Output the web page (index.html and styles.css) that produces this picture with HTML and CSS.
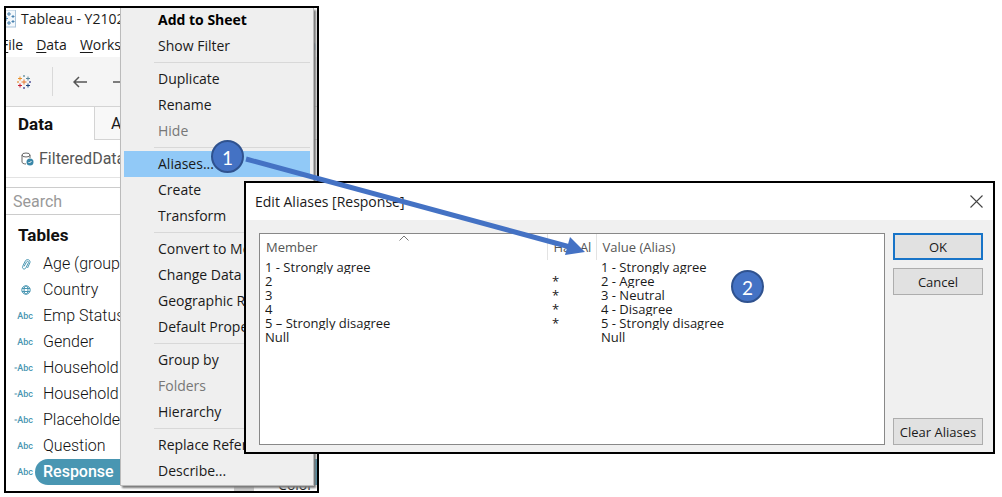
FILE: index.html
```html
<!DOCTYPE html>
<html lang="en">
<head>
<meta charset="utf-8">
<title>Edit Aliases</title>
<link rel="stylesheet" href="styles.css">
</head>
<body>
<main class="stage">
  <section class="app">
    <header class="titlebar">
      <svg class="app-icon" width="10" height="18" viewBox="0 0 10 18"><rect x="-6" y="0" width="15.500" height="17" fill="#f3f8fc" stroke="#aac4da"/><path d="M3 2v4M1 4h4M3 11v4M1 13h4M0 6v5M-2 8.500h4M7 5v3M5.500 6.500h3M7 10v3M5.500 11.500h3" stroke="#4a83b0" fill="none"/></svg>
      <span>Tableau - Y2102</span>
    </header>
    <nav class="menubar">
      <a href="#"><u>F</u>ile</a><a href="#"><u>D</u>ata</a><a href="#"><u>W</u>orksheet</a>
      <span class="menubar-end">n</span>
    </nav>
    <div class="toolbar">
      <svg width="16" height="16" viewBox="0 0 16 16" fill="none" stroke-width="1"><path d="M8 5.500v5M5.500 8h5" stroke="#e8762d"/><path d="M4 2.500v4M2 4.500h4" stroke="#eb9129"/><path d="M12 2.500v4M10 4.500h4" stroke="#5b879b"/><path d="M4 9.500v4M2 11.500h4" stroke="#c72035"/><path d="M12 9.500v4M10 11.500h4" stroke="#1f457e"/><path d="M8 1v2M7 2h2" stroke="#7099a6"/><path d="M8 13v2M7 14h2" stroke="#59589b"/><path d="M2 7v2M1 8h2" stroke="#e8a35a"/><path d="M14 7v2M13 8h2" stroke="#59589b"/></svg>
      <span class="tool-divider"></span>
      <button class="tool" aria-label="Back"><svg width="14" height="12" viewBox="0 0 14 12"><path d="M14 6H1M6 1L1 6l5 5" fill="none" stroke="#555" stroke-width="1.500"/></svg></button>
      <button class="tool" aria-label="Forward"><svg width="14" height="12" viewBox="0 0 14 12"><path d="M0 6h13M8 1l5 5-5 5" fill="none" stroke="#555" stroke-width="1.500"/></svg></button>
    </div>
    <div class="tabs">
      <button class="tab tab-active">Data</button>
      <button class="tab">Analytics</button>
    </div>
    <div class="source">
      <svg width="13" height="14" viewBox="0 0 13 14" fill="none" stroke="#666"><path d="M1 3v7c0 1 1.500 2 4 2M9 3v3"/><ellipse cx="5" cy="3" rx="4" ry="2"/><circle cx="9" cy="10" r="3.500" fill="#3a87a8" stroke="none"/><path d="M7.500 10l1 1 2-2" stroke="#fff"/></svg>
      <span>FilteredData</span>
    </div>
    <input class="search" type="text" placeholder="Search" aria-label="Search">
    <h2 class="tables-title">Tables</h2>
    <ul class="fields">
      <li><span class="type"><svg width="10" height="13" viewBox="0 0 10 13" fill="none" stroke="#4996b2"><path d="M3 8.500l2.500-4.500c1-1.500 2.500-.5 2 .7L4.800 10c-1.200 2-4 .8-3.200-1.500L4.300 3c1.500-2.700 5.500-1.200 4.600 1.800L6.500 10"/></svg></span><span class="label">Age (group)</span></li>
      <li><span class="type"><svg width="10" height="10" viewBox="0 0 10 10" fill="none" stroke="#4996b2"><circle cx="5" cy="5" r="4.200"/><ellipse cx="5" cy="5" rx="2" ry="4.200"/><path d="M1 3.500h8M1 6.500h8"/></svg></span><span class="label">Country</span></li>
      <li><span class="type">Abc</span><span class="label">Emp Status</span></li>
      <li><span class="type">Abc</span><span class="label">Gender</span></li>
      <li><span class="type"><small>=</small>Abc</span><span class="label">Household</span></li>
      <li><span class="type"><small>=</small>Abc</span><span class="label">Household</span></li>
      <li><span class="type"><small>=</small>Abc</span><span class="label">Placeholder</span></li>
      <li><span class="type">Abc</span><span class="label">Question</span></li>
      <li><span class="type">Abc</span><span class="label selected">Response</span></li>
    </ul>
    <div class="app-foot"><span class="thumb"></span><span class="foot-text">Color</span></div>

    <ul class="context">
      <li class="strong">Add to Sheet</li>
      <li>Show Filter</li>
      <li class="sep"></li>
      <li>Duplicate</li>
      <li>Rename</li>
      <li class="off">Hide</li>
      <li class="sep"></li>
      <li class="hot">Aliases...</li>
      <li>Create</li>
      <li>Transform</li>
      <li class="sep"></li>
      <li>Convert to Measure</li>
      <li>Change Data Type</li>
      <li>Geographic Role</li>
      <li>Default Properties</li>
      <li class="sep"></li>
      <li>Group by</li>
      <li class="off">Folders</li>
      <li>Hierarchy</li>
      <li class="sep"></li>
      <li>Replace References...</li>
      <li>Describe...</li>
    </ul>
  </section>

  <section class="dialog" role="dialog" aria-labelledby="dialog-title">
    <header class="dialog-head">
      <h1 id="dialog-title">Edit Aliases [Response]</h1>
      <button class="close" aria-label="Close"><svg width="13" height="13" viewBox="0 0 13 13"><path d="M.5.5l12 12M12.500.5l-12 12" fill="none" stroke="#444" stroke-width="1.100"/></svg></button>
    </header>
    <div class="dialog-body">
      <div class="list">
        <table>
          <colgroup><col class="c-member"><col class="c-has"><col></colgroup>
          <thead><tr>
            <th>Member<svg class="caret" width="10" height="6" viewBox="0 0 10 6"><path d="M.5 5.500L5 1l4.500 4.500" fill="none" stroke="#777"/></svg></th>
            <th>Has Al</th><th>Value (Alias)</th>
          </tr></thead>
          <tbody>
            <tr><td><div>1 - Strongly agree</div></td><td></td><td><div>1 - Strongly agree</div></td></tr>
            <tr><td><div>2</div></td><td><div>*</div></td><td><div>2 - Agree</div></td></tr>
            <tr><td><div>3</div></td><td><div>*</div></td><td><div>3 - Neutral</div></td></tr>
            <tr><td><div>4</div></td><td><div>*</div></td><td><div>4 - Disagree</div></td></tr>
            <tr><td><div>5 – Strongly disagree</div></td><td><div>*</div></td><td><div>5 - Strongly disagree</div></td></tr>
            <tr><td><div>Null</div></td><td></td><td><div>Null</div></td></tr>
          </tbody>
        </table>
      </div>
      <div class="actions">
        <button class="btn primary">OK</button>
        <button class="btn">Cancel</button>
        <button class="btn last">Clear Aliases</button>
      </div>
    </div>
  </section>

  <svg class="arrow" width="350" height="110" viewBox="0 0 350 110"><path d="M6 9L330 97" stroke="#4472c4" stroke-width="5" fill="none"/><path d="M345 102L325 105L330 87Z" fill="#4472c4"/></svg>
  <span class="badge one">1</span>
  <span class="badge two">2</span>
</main>
</body>
</html>
```
FILE: styles.css
```css
* { box-sizing: border-box; }
body { margin: 0; background: #fff; color: #1a1a1a; font: 14px/26px "Open Sans", "Noto Sans", sans-serif; }
ul { list-style: none; margin: 0; padding: 0; }
button { font: inherit; color: inherit; border: 0; background: none; padding: 0; }
svg { flex: none; }
.stage { position: relative; padding: 6px 4px 4px; }

.app { position: relative; width: 315px; border: 2px solid #000; overflow: hidden; white-space: nowrap; }
.titlebar { display: flex; align-items: center; gap: 5px; height: 22px; }
.menubar { display: flex; align-items: center; gap: 13px; height: 27px; margin-left: -5px; padding-top: 2px; }
.menubar a { color: #1a1a1a; text-decoration: none; }
.menubar u { text-underline-offset: 2px; }
.menubar-end { margin-left: auto; padding-right: 1px; }
.toolbar { display: flex; align-items: center; height: 50px; padding-left: 10px; background: #f5f5f5; border-bottom: 1px solid #d4d4d4; }
.tool-divider { width: 1px; height: 29px; margin: 0 20px 0 20px; background: #d9d9d9; }
.tool { display: flex; margin-right: 26px; }
.tabs { display: flex; height: 33px; font: 16px "Roboto", sans-serif; }
.tab { width: 88px; padding-left: 12px; text-align: left; }
.tab + .tab { flex: 1; padding-left: 16px; background: #f8f8f8; border: solid #d4d4d4; border-width: 0 0 1px 1px; }
.tab-active { font-weight: 700; font-size: 17px; color: #111; }
.source { display: flex; align-items: center; gap: 5px; height: 38px; padding-left: 15px; border-bottom: 1px solid #e3e3e3; font: 16px "Roboto", sans-serif; color: #555; }
.search { display: block; width: 100%; height: 28px; margin-top: 9px; padding: 0 7px; border: solid #ccc; border-width: 1px 0; background: #fff; font: 16px "Roboto", sans-serif; }
.search::placeholder { color: #999; }
.tables-title { margin: 0; padding: 7px 12px 3px; font: 700 17px/26px "Roboto", sans-serif; color: #111; }
.fields { font: 300 16px/26px "Roboto", sans-serif; color: #111; }
.fields li { display: flex; height: 26px; }
.type { display: flex; align-items: center; justify-content: flex-end; width: 27px; font-size: 9px; font-weight: 500; color: #4996b2; }
.type small { font-size: 6px; }
.type svg { margin-right: 2px; }
.label { flex: 1; margin-left: 2px; padding-left: 8px; }
.selected { border-radius: 13px 0 0 13px; background: #4996b2; color: #fff; font-weight: 500; }
.app-foot { display: flex; justify-content: flex-end; height: 6px; padding-right: 4px; gap: 24px; }
.thumb { width: 20px; background: #ccc; }
.foot-text { height: 6px; line-height: 0; }

.context { position: absolute; top: 0; left: 114px; width: 194px; padding: 0 3px 1px; background: #efefef; border: solid #bbb; border-width: 0 1px 1px; box-shadow: 2px 2px 2px #777; }
.context li { height: 26px; padding-left: 34px; }
.context .strong { height: 25px; font-weight: 700; line-height: 24px; color: #000; }
.context .off { color: #777; }
.context .hot { background: #91c9f7; }
.context .sep { height: 1px; margin: 3px 0 3px 30px; padding: 0; background: #d8d8d8; }

.dialog { position: absolute; top: 181px; left: 244px; right: 7px; border: 2px solid #000; background: #f0f0f0; }
.dialog-head { display: flex; align-items: center; justify-content: space-between; height: 37px; padding: 0 10px 0 9px; background: #fff; }
.dialog-head h1 { margin: 0; font-size: 14px; font-weight: 400; }
.close { display: flex; }
.dialog-body { display: flex; gap: 8px; padding: 13px 10px 7px 13px; }
.list { flex: 1; min-height: 212px; background: #fff; border: 1px solid #888; }
table { width: 100%; table-layout: fixed; border-collapse: collapse; text-align: left; font: 13px/14px "Open Sans", sans-serif; }
.c-member { width: 287px; }
.c-has { width: 49px; }
th { position: relative; height: 26px; padding: 0 0 0 6px; border-right: 1px solid #e3e3e3; font-weight: 400; color: #555; white-space: nowrap; overflow: hidden; }
th:last-child { border: 0; }
.caret { position: absolute; top: 1px; left: 139px; }
td { height: 14px; padding: 0 5px; }
td div { height: 14px; overflow: hidden; white-space: nowrap; }
.actions { display: flex; flex-direction: column; gap: 8px; width: 90px; }
.btn { height: 27px; border: 1px solid #adadad; background: #e1e1e1; font: 13px "Open Sans", sans-serif; }
.primary { border: 2px solid #1874c8; }
.last { margin-top: auto; }

.arrow { position: absolute; top: 150px; left: 240px; }
.badge { position: absolute; width: 33px; height: 33px; border: 2px solid #2f528f; border-radius: 50%; background: #4472c4; color: #fff; text-align: center; font: 19px/32px "Lato", sans-serif; }
.one { top: 140px; left: 211px; }
.two { top: 270px; left: 731px; }
```
